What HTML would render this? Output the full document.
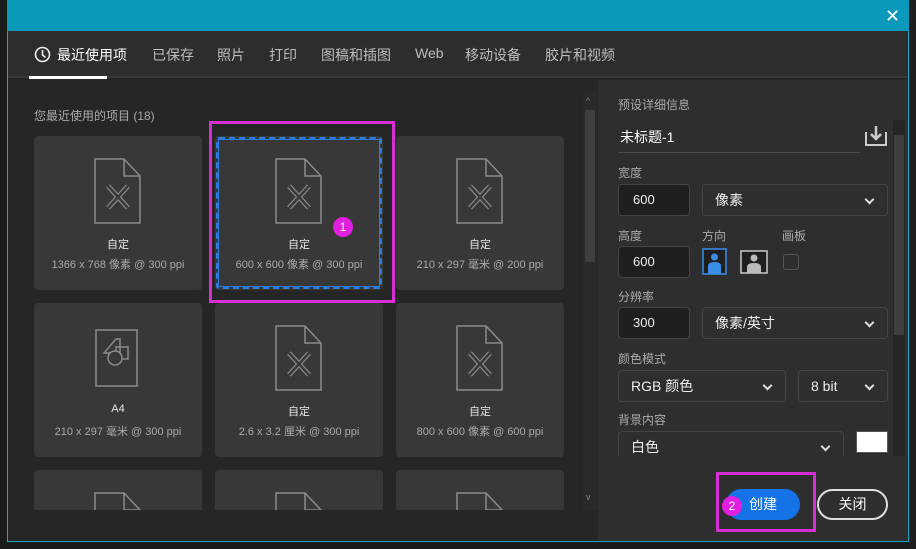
<!DOCTYPE html>
<html><head><meta charset="utf-8"><style>
*{margin:0;padding:0;box-sizing:border-box}
html,body{width:916px;height:549px;overflow:hidden}
body{background:#1b1b1b;font-family:"Liberation Sans","Noto Sans CJK SC",sans-serif;position:relative;color:#ddd}
.a{position:absolute}
.dlg{left:7px;top:0;width:902px;height:542px;background:#262626;border:1px solid #1ba3c2;border-top:none}
.top{left:7px;top:0;width:902px;height:31px;background:#0b99bb}
.tabs{left:8px;top:31px;width:900px;height:47px;background:#2d2d2d;border-bottom:2px solid #3a3a3a}
.tab{top:45px;font-size:14px;color:#bdbdbd}
.card{background:#383838;border-radius:4px;width:168px;height:154px}
.card .t{position:absolute;left:0;right:0;top:100px;text-align:center;font-size:11px;color:#e6e6e6}
.card .s{position:absolute;left:0;right:0;top:120px;text-align:center;font-size:11px;color:#aaa}
.card svg{position:absolute;left:60px;top:22px}
.lbl{font-size:12px;color:#aaa}
.box{border:1px solid #444;border-radius:4px;background:#1f1f1f;font-size:13px;color:#eee;padding-left:14px;line-height:30px}
.sel{border:1px solid #444;border-radius:4px;background:#2e2e2e;font-size:14px;color:#eee;padding-left:12px;line-height:30px}
.chev{position:absolute;right:14px;top:11px;width:7px;height:7px;border-right:2px solid #ddd;border-bottom:2px solid #ddd;transform:rotate(45deg)}
</style></head><body>
<svg width="0" height="0" style="position:absolute;left:0;top:0"><defs>
<g id="doc"><path d="M1 1H30L46 18V65H1Z M30 1V18H46" fill="none" stroke="#8a8a8a" stroke-width="1.5"/><path d="M14 28L34 50M34 28L14 50" stroke="#8a8a8a" stroke-width="5" fill="none"/><path d="M14 28L34 50M34 28L14 50" stroke="#383838" stroke-width="2.5" fill="none"/></g>
</defs></svg>
<div class="a dlg"></div>
<div class="a top"></div>
<div class="a" style="left:885px;top:6px;color:#fff;font-size:18px">✕</div>
<div class="a tabs"></div>
<svg class="a" style="left:34px;top:46px" width="17" height="17"><circle cx="8.5" cy="8.5" r="7" fill="none" stroke="#eee" stroke-width="1.6"/><path d="M8.5 4v5l3 2.5" fill="none" stroke="#eee" stroke-width="1.6"/></svg>
<div class="a tab" style="left:57px;color:#fff">最近使用项</div>
<div class="a" style="left:29px;top:76px;width:78px;height:3px;background:#fff"></div>
<div class="a tab" style="left:152px">已保存</div>
<div class="a tab" style="left:217px">照片</div>
<div class="a tab" style="left:269px">打印</div>
<div class="a tab" style="left:321px">图稿和插图</div>
<div class="a tab" style="left:415px">Web</div>
<div class="a tab" style="left:465px">移动设备</div>
<div class="a tab" style="left:545px">胶片和视频</div>

<div class="a lbl" style="left:34px;top:107px">您最近使用的项目 (18)</div>

<div class="a card" style="left:34px;top:136px"><svg width="50" height="70"><use href="#doc"/></svg><div class="t">自定</div><div class="s">1366 x 768 像素 @ 300 ppi</div></div>
<div class="a card" style="left:215px;top:136px"><svg width="50" height="70"><use href="#doc"/></svg><div class="t">自定</div><div class="s">600 x 600 像素 @ 300 ppi</div></div>
<div class="a card" style="left:396px;top:136px"><svg width="50" height="70"><use href="#doc"/></svg><div class="t">自定</div><div class="s">210 x 297 毫米 @ 200 ppi</div></div>
<div class="a card" style="left:34px;top:303px"><svg width="50" height="70"><rect x="2" y="5" width="41" height="56" fill="none" stroke="#8a8a8a" stroke-width="1.5"/><path d="M22 14L10 28H26V14Z" fill="none" stroke="#8a8a8a" stroke-width="1.5"/><rect x="22" y="22" width="12" height="12" fill="none" stroke="#8a8a8a" stroke-width="1.5"/><circle cx="21" cy="33" r="7" fill="#383838" stroke="#8a8a8a" stroke-width="1.5"/></svg><div class="t">A4</div><div class="s">210 x 297 毫米 @ 300 ppi</div></div>
<div class="a card" style="left:215px;top:303px"><svg width="50" height="70"><use href="#doc"/></svg><div class="t">自定</div><div class="s">2.6 x 3.2 厘米 @ 300 ppi</div></div>
<div class="a card" style="left:396px;top:303px"><svg width="50" height="70"><use href="#doc"/></svg><div class="t">自定</div><div class="s">800 x 600 像素 @ 600 ppi</div></div>
<div class="a" style="left:34px;top:470px;width:530px;height:40px;overflow:hidden">
<div class="a card" style="left:0;top:0"><svg width="50" height="70"><use href="#doc"/></svg></div>
<div class="a card" style="left:181px;top:0"><svg width="50" height="70"><use href="#doc"/></svg></div>
<div class="a card" style="left:362px;top:0"><svg width="50" height="70"><use href="#doc"/></svg></div>
</div>
<div class="a" style="left:216px;top:137px;width:166px;height:152px;border:2px dashed #2b7de0;border-radius:3px;box-shadow:inset 0 0 0 1px #2b7de0"></div>
<div class="a" style="left:209px;top:121px;width:186px;height:182px;border:3px solid #d52fd5"></div>
<div class="a" style="left:333px;top:217px;width:20px;height:20px;border-radius:50%;background:#e01fe0;color:#fff;font-size:12px;text-align:center;line-height:20px">1</div>
<div class="a" style="left:583px;top:92px;width:14px;height:418px;background:#2a2a2a"></div>
<div class="a" style="left:585px;top:110px;width:10px;height:152px;background:#3e3e3e"></div>
<div class="a" style="left:586px;top:96px;color:#888;font-size:9px">^</div>
<div class="a" style="left:586px;top:492px;color:#888;font-size:9px">v</div>
<div class="a" style="left:598px;top:80px;width:310px;height:461px;background:#2e2e2e"></div>
<div class="a lbl" style="left:618px;top:96px">预设详细信息</div>
<div class="a" style="left:620px;top:127px;font-size:14px;color:#fff">未标题-1</div>
<div class="a" style="left:618px;top:152px;width:242px;height:1px;background:#4a4a4a"></div>
<svg class="a" style="left:865px;top:125px" width="22" height="21"><path d="M1 7V20H21V7" fill="none" stroke="#ccc" stroke-width="2"/><path d="M11 1V13M6 9L11 14L16 9" fill="none" stroke="#ccc" stroke-width="2.5"/></svg>
<div class="a lbl" style="left:618px;top:164px">宽度</div>
<div class="a box" style="left:618px;top:184px;width:72px;height:32px">600</div>
<div class="a sel" style="left:702px;top:184px;width:186px;height:32px">像素<div class="chev"></div></div>
<div class="a lbl" style="left:618px;top:227px">高度</div>
<div class="a lbl" style="left:702px;top:227px">方向</div>
<div class="a lbl" style="left:782px;top:227px">画板</div>
<div class="a box" style="left:618px;top:246px;width:72px;height:32px">600</div>
<svg class="a" style="left:702px;top:248px" width="26" height="28"><rect x="1" y="1" width="23" height="25" fill="#1f1f1f" stroke="#3a8ee8" stroke-width="1.5"/><circle cx="12.5" cy="9" r="3.5" fill="#3a8ee8"/><path d="M6 26V18Q6 14 12.5 14Q19 14 19 18V26Z" fill="#3a8ee8"/></svg>
<svg class="a" style="left:740px;top:250px" width="28" height="24"><rect x="1" y="1" width="26" height="22" fill="#1f1f1f" stroke="#ccc" stroke-width="1.5"/><circle cx="14" cy="8" r="3.5" fill="#bbb"/><path d="M7 23V17Q7 13 14 13Q21 13 21 17V23Z" fill="#bbb"/></svg>
<div class="a" style="left:783px;top:254px;width:16px;height:16px;border:1px solid #555;border-radius:3px"></div>
<div class="a lbl" style="left:618px;top:288px">分辨率</div>
<div class="a box" style="left:618px;top:307px;width:72px;height:32px">300</div>
<div class="a sel" style="left:702px;top:307px;width:186px;height:32px">像素/英寸<div class="chev"></div></div>
<div class="a lbl" style="left:618px;top:350px">颜色模式</div>
<div class="a sel" style="left:618px;top:370px;width:168px;height:32px">RGB 颜色<div class="chev"></div></div>
<div class="a sel" style="left:798px;top:370px;width:90px;height:32px">8 bit<div class="chev"></div></div>
<div class="a lbl" style="left:618px;top:411px">背景内容</div>
<div class="a" style="left:618px;top:431px;width:226px;height:25px;overflow:hidden"><div class="sel" style="width:226px;height:32px;position:relative">白色<div class="chev"></div></div></div>
<div class="a" style="left:856px;top:431px;width:32px;height:22px;background:#fff;border:1px solid #555"></div>
<div class="a" style="left:598px;top:456px;width:296px;height:85px;background:#2e2e2e"></div>
<div class="a" style="left:893px;top:120px;width:12px;height:336px;background:#262626"></div>
<div class="a" style="left:894px;top:135px;width:10px;height:200px;background:#3e3e3e"></div>
<div class="a" style="left:726px;top:489px;width:74px;height:31px;border-radius:16px;background:#1473e6;color:#fff;font-size:14px;text-align:center;line-height:31px">创建</div>
<div class="a" style="left:722px;top:496px;width:20px;height:20px;border-radius:50%;background:#e01fe0;color:#fff;font-size:12px;text-align:center;line-height:20px">2</div>
<div class="a" style="left:716px;top:472px;width:100px;height:60px;border:3px solid #d52fd5"></div>
<div class="a" style="left:817px;top:489px;width:71px;height:31px;border-radius:16px;border:2px solid #ddd;color:#fff;font-size:14px;text-align:center;line-height:27px">关闭</div>
<div class="a" style="left:909px;top:0;width:7px;height:549px;background:#1e1e1e"></div>
</body></html>
